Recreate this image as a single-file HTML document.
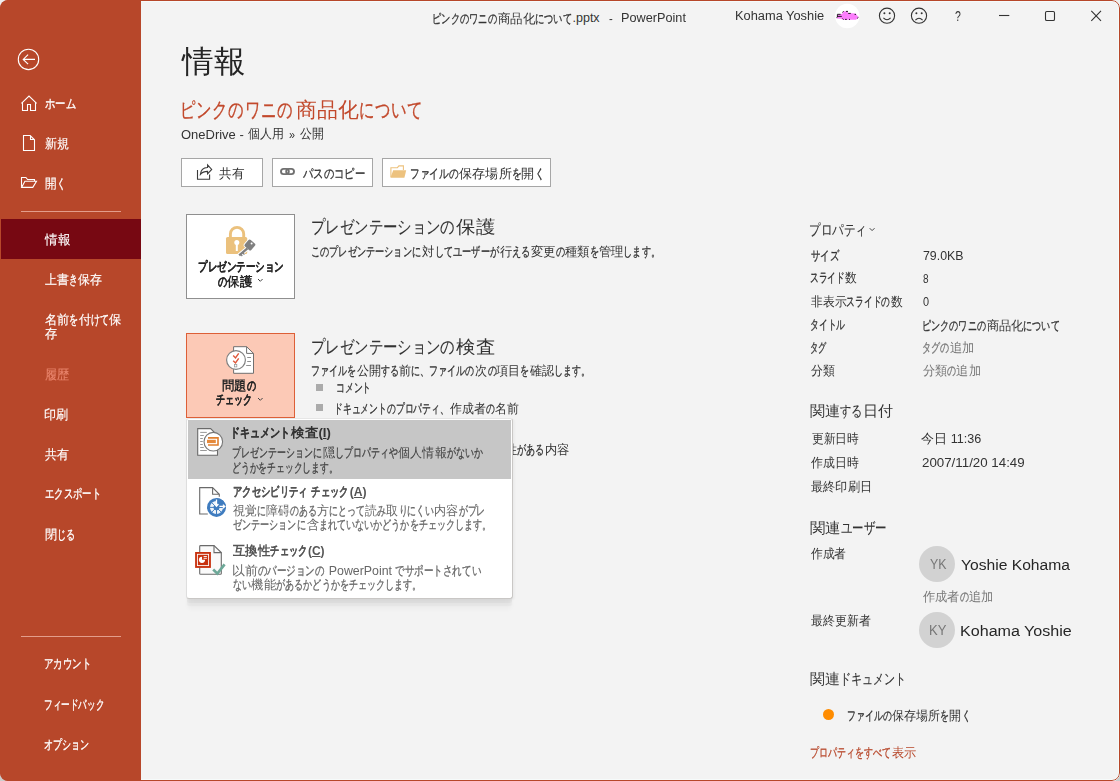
<!DOCTYPE html>
<html lang="ja">
<head>
<meta charset="utf-8">
<title>PowerPoint - 情報</title>
<style>
html,body{margin:0;padding:0}
body{width:1120px;height:781px;overflow:hidden;position:relative;background:linear-gradient(#efefef 0,#efefef 50%,#cbcdcd 50%,#cbcdcd 100%);font-family:"Liberation Sans",sans-serif;font-size:13px;color:#333}
#win{position:absolute;left:0;top:0;width:1120px;height:781px;border-radius:8px;overflow:hidden;background:#f3f3f3}
#frame{position:absolute;left:0;top:0;width:1118px;height:779px;border:1px solid #b7472a;border-radius:8px;z-index:50}
#side{position:absolute;left:0;top:0;width:141px;height:781px;background:#b7472a}
#main{position:absolute;left:141px;top:0;width:979px;height:781px;background:#f3f3f3;box-shadow:inset -2px 0 0 0 #f6fbfb, inset 0 2px 0 0 #f6fbfb, inset 0 -2px 0 0 #f6fbfb}
.abs{position:absolute}
.t{position:absolute;white-space:nowrap;line-height:40px;transform-origin:0 0;display:block}
.k{display:inline-block;transform:scaleX(.74);transform-origin:0 0;-webkit-text-stroke:.3px}
.b .k{-webkit-text-stroke:.15px}
.l .k{-webkit-text-stroke:.12px}
#side .t{-webkit-text-stroke:.15px}
#side .k{-webkit-text-stroke:.35px}
.t u{text-decoration:underline;text-underline-offset:1px}
.sel{position:absolute;left:0;top:219px;width:141px;height:40px;background:#770812}
.sep{position:absolute;left:21px;width:100px;height:1px;background:#e39d8b}
.btn{position:absolute;top:158px;height:27px;background:#fff;border:1px solid #a6a6a6}
.card{position:absolute;left:186px;width:107px;border:1px solid #8f8f8f;background:#fff}
.card.on{background:#fcc9b6;border-color:#dd5f37}
.bul{position:absolute;left:316px;width:7px;height:7px;background:#ababab}
#drop{position:absolute;left:186px;top:418px;width:325px;height:179px;background:#fff;border:1px solid #c9c7c5;border-left-color:#dedede;border-top-color:#e6e6e6;border-radius:3px;box-shadow:0 5px 1px -1px rgba(0,0,0,.03),0 8px 1.5px -1px rgba(0,0,0,.03),0 12px 5px -2px rgba(0,0,0,.03),2px 1px 2px rgba(0,0,0,.03)}
#drop .hl{position:absolute;left:1px;top:1px;width:323px;height:59px;background:#c6c6c6}
.av{position:absolute;width:36px;height:36px;border-radius:50%;background:#d2d2d2}
svg{position:absolute;left:0;top:0;overflow:visible}
</style>
</head>
<body>
<div id="win">

<!-- ============ SIDEBAR ============ -->
<div id="side">
  <div class="sel"></div>
  <div class="sep" style="top:211px"></div>
  <div class="sep" style="top:636px"></div>
  <svg width="141" height="781" viewBox="0 0 141 781" fill="none" stroke="#fff" stroke-width="1.1">
    <!-- back -->
    <circle cx="28.5" cy="59.4" r="10.2"/>
    <path d="M23.2 59.4H35M28.1 54.6L23.2 59.4L28.1 64.2"/>
    <!-- home -->
    <path d="M21.4 103.4L29 96.1L36.6 103.4M22.5 102.6V110.5H27.5V104.5H30.5V110.5H35.5V102.6"/>
    <!-- new -->
    <path d="M23.5 135.5H30.2L34.5 139.8V150.5H23.5ZM30.5 135.8V139.5H34.2"/>
    <!-- open -->
    <path d="M21.5 186.8V177.5H25.9L27.6 179.5H34.5V180.8M21.6 187.4L24.9 181.2H36.5L32.8 187.4Z"/>
  </svg>
<span class="t" style="left:44.8px;top:83.8px;font-size:12.5px;color:#ffffff;transform:scaleX(1.075)"><span class="k" style="margin-right:-0.78em">ホーム</span></span>
<span class="t" style="left:44.8px;top:124.0px;font-size:12.5px;color:#ffffff;transform:scaleX(0.931)">新規</span>
<span class="t" style="left:44.8px;top:164.1px;font-size:12.5px;color:#ffffff;transform:scaleX(0.895)">開<span class="k" style="margin-right:-0.26em">く</span></span>
<span class="t" style="left:44.8px;top:219.5px;font-size:12.5px;color:#ffffff;transform:scaleX(0.968)">情報</span>
<span class="t" style="left:44.8px;top:259.5px;font-size:12.5px;color:#ffffff;transform:scaleX(0.915)">上書<span class="k" style="margin-right:-0.26em">き</span>保存</span>
<span class="t" style="left:44.8px;top:300.3px;font-size:12.5px;color:#ffffff;transform:scaleX(0.941)">名前<span class="k" style="margin-right:-0.26em">を</span>付<span class="k" style="margin-right:-0.52em">けて</span>保</span>
<span class="t" style="left:44.8px;top:313.8px;font-size:12.5px;color:#ffffff;transform:scaleX(0.938)">存</span>
<span class="t" style="left:44.8px;top:355.1px;font-size:12.5px;color:#e8846c;transform:scaleX(0.931)">履歴</span>
<span class="t" style="left:43.9px;top:394.8px;font-size:12.5px;color:#ffffff;transform:scaleX(0.928)">印刷</span>
<span class="t" style="left:44.8px;top:434.9px;font-size:12.5px;color:#ffffff;transform:scaleX(0.915)">共有</span>
<span class="t" style="left:44.8px;top:474.4px;font-size:12.5px;color:#ffffff;transform:scaleX(0.970)"><span class="k" style="margin-right:-1.56em">エクスポート</span></span>
<span class="t" style="left:44.8px;top:515.2px;font-size:12.5px;color:#ffffff;transform:scaleX(0.941)">閉<span class="k" style="margin-right:-0.52em">じる</span></span>
<span class="t" style="left:43.9px;top:644.3px;font-size:12.5px;color:#ffffff;transform:scaleX(0.980)"><span class="k" style="margin-right:-1.30em">アカウント</span></span>
<span class="t" style="left:44.0px;top:684.5px;font-size:12.5px;color:#ffffff;transform:scaleX(0.894)"><span class="k" style="margin-right:-1.82em">フィードバック</span></span>
<span class="t" style="left:44.0px;top:725.2px;font-size:12.5px;color:#ffffff;transform:scaleX(0.941)"><span class="k" style="margin-right:-1.30em">オプション</span></span>
</div>

<!-- ============ MAIN ============ -->
<div id="main"></div>

<!-- title bar -->
<div id="titlebar">
<span class="t" style="left:431.5px;top:-1.5px;font-size:12.5px;color:#333333;transform:scaleX(0.962)"><span class="k" style="margin-right:-1.82em">ピンクのワニの</span>商品化<span class="k" style="margin-right:-1.04em">について</span></span>
<span class="t" style="left:572.5px;top:-1.7px;font-size:12.5px;color:#333333;transform:scaleX(1.000)">.pptx</span>
<span class="t" style="left:608.7px;top:-1.3px;font-size:12.5px;color:#333333;transform:scaleX(0.900)">-</span>
<span class="t" style="left:620.5px;top:-1.7px;font-size:12.5px;color:#333333;transform:scaleX(1.016)">PowerPoint</span>
<span class="t" style="left:734.5px;top:-4.0px;font-size:12.5px;color:#333333;transform:scaleX(1.026)">Kohama Yoshie</span>
<span class="t" style="left:955.0px;top:-3.6px;font-size:15px;color:#333333;transform:scaleX(0.700)">?</span>
  <svg width="1120" height="32" viewBox="0 0 1120 32" fill="none">
    <circle cx="847.3" cy="16" r="12.2" fill="#fff"/>
    <path d="M836.8 18.6L837.6 14.4L842.4 13.7L843 11.5L847.6 11L848.1 12.9L855.5 13.6L858.7 17.3L856 19.8H842.6L841 18.8Z" fill="#fb7efb"/>
    <path d="M837.4 14.3H840.6M837.4 14.3V17.2M836.5 17.6L837.4 17M837.5 16.4H841.8M842.5 12.5L843.6 11.2M846 11.4H848M848.2 13.4H850.8M854.6 14.4H856M842.6 18.5L843.6 19.6M845 19.4H846.8M849 19.4H850M857.2 18.4L858.4 17.4" stroke="#111" stroke-width=".9"/>
    <g stroke="#333" stroke-width="1.1">
      <circle cx="887" cy="15.7" r="7.6"/>
      <path d="M883.4 17.8Q887 21.6 890.6 17.8"/>
      <circle cx="919" cy="15.7" r="7.6"/>
      <path d="M915.4 20.2Q919 16.4 922.6 20.2"/>
      <path d="M999 15.5H1009.3"/>
      <rect x="1045.5" y="11.5" width="9" height="9" rx="1.3"/>
      <path d="M1091.3 10.8L1101 20.8M1101 10.8L1091.3 20.8"/>
    </g>
    <g fill="#333"><circle cx="884.4" cy="13.3" r="1"/><circle cx="889.7" cy="13.3" r="1"/><circle cx="916.4" cy="13.3" r="1"/><circle cx="921.7" cy="13.3" r="1"/></g>
  </svg>
</div>

<!-- buttons -->
<div class="btn" style="left:181px;width:80px"></div>
<div class="btn" style="left:272px;width:99px"></div>
<div class="btn" style="left:382px;width:167px"></div>

<!-- cards -->
<div class="card" style="top:214px;height:83px"></div>
<div class="card on" style="top:333px;height:83px"></div>
<div class="bul" style="top:384px"></div>
<div class="bul" style="top:404px"></div>

<!-- right column shapes -->
<div class="av" style="left:919px;top:546px"></div>
<div class="av" style="left:919px;top:612px"></div>
<div class="abs" style="left:823px;top:708.5px;width:11px;height:11px;border-radius:50%;background:#ff8c00;filter:blur(.6px)"></div>

<!-- icons in main area -->
<svg id="icons" width="1120" height="781" viewBox="0 0 1120 781" fill="none">
  <!-- share -->
  <g stroke="#3a3a3a" stroke-width="1.1">
    <path d="M197.5 170V179.2H209.6V174.6"/>
    <path d="M200.4 174.4C200.7 170 203.6 167.7 207.6 167.5V164.9L211.7 169.4L207.6 173.9V171.4C204.6 171.4 202.2 172.2 200.4 174.4Z"/>
  </g>
  <!-- link -->
  <g stroke="#707070" stroke-width="1.9">
    <rect x="281" y="168.9" width="7.8" height="5.2" rx="2.6"/>
    <rect x="286.2" y="168.9" width="7.8" height="5.2" rx="2.6"/>
  </g>
  <!-- folder -->
  <path d="M390.9 177V167.7H397.4L398.9 165.9H403.4V170" stroke="#edc27e" stroke-width="1.1"/>
  <path d="M390.4 177.8L393.2 170.2H406.2L404.4 177.8Z" fill="#edc27e"/>
  <!-- lock + key -->
  <rect x="226" y="237" width="21.2" height="17" rx="1.6" fill="#ebc17d"/>
  <path d="M230.4 238V234A6.65 6.65 0 0 1 243.7 234V238" stroke="#ebc17d" stroke-width="2.9"/>
  <circle cx="236.8" cy="242.5" r="2.5" fill="#fff"/><rect x="235.8" y="243" width="2" height="8" fill="#fff"/>
  <g stroke="#fff" stroke-width="1.6" fill="#fff">
    <rect x="245.6" y="240.7" width="8.6" height="8.6" rx="1.6" transform="rotate(42 249.9 245)"/>
    <path d="M247.2 248.6L239 255.4" stroke-width="4.2"/>
  </g>
  <rect x="245.6" y="240.7" width="8.6" height="8.6" rx="1.6" transform="rotate(42 249.9 245)" fill="#808080"/>
  <path d="M247.4 248.4L239.2 255.3" stroke="#808080" stroke-width="2.4"/>
  <path d="M241 254.6L242.3 256M243 253L244.4 254.6" stroke="#808080" stroke-width="1.2"/>
  <circle cx="251.6" cy="243.4" r="1" fill="#fff"/>
  <!-- chevrons -->
  <g stroke="#444" stroke-width="1">
    <path d="M258 279L260.3 281.3L262.6 279"/>
    <path d="M258 398L260.3 400.3L262.6 398"/>
    <path d="M869.7 228.2L872.1 230.6L874.5 228.2"/>
  </g>
  <!-- inspect -->
  <path d="M233.6 346.7H246.6L253.5 353.4V373.3H233.6Z" fill="#fff" stroke="#707070"/>
  <path d="M246.6 346.7V353.4H253.5" stroke="#707070"/>
  <path d="M247.2 357.5H251M247.2 361.5H251M246.2 365.5H251" stroke="#909090"/>
  <circle cx="236" cy="360" r="9.4" fill="#fff" stroke="#808080" stroke-width="1.2"/>
  <path d="M233.2 355.6L235.5 357.9L238.7 353.3M233.2 360.7L235.5 363L238.7 358.4" stroke="#e0573a" stroke-width="1.4"/>
  <rect x="234.4" y="364.5" width="2.4" height="2.4" stroke="#999" stroke-width=".8"/>
</svg>

<!-- ============ MAIN TEXT ============ -->
<span class="t l" style="left:182.3px;top:41.9px;font-size:31px;color:#262626;transform:scaleX(1.019);font-weight:300">情報</span>
<span class="t" style="left:179.8px;top:90.3px;font-size:20.5px;color:#c2492c;transform:scaleX(0.993)"><span class="k" style="margin-right:-1.82em">ピンクのワニの</span>商品化<span class="k" style="margin-right:-1.04em">について</span></span>
<span class="t" style="left:180.7px;top:114.5px;font-size:12.5px;color:#333333;transform:scaleX(1.038)">OneDrive -</span>
<span class="t" style="left:248.0px;top:113.8px;font-size:12.5px;color:#333333;transform:scaleX(0.921)">個人用</span>
<span class="t" style="left:289.0px;top:115.0px;font-size:12.5px;color:#333333;transform:scaleX(0.857)">»</span>
<span class="t" style="left:300.0px;top:114.3px;font-size:12.5px;color:#333333;transform:scaleX(0.920)">公開</span>
<span class="t" style="left:219.3px;top:153.5px;font-size:12.5px;color:#333333;transform:scaleX(0.969)">共有</span>
<span class="t" style="left:302.5px;top:153.5px;font-size:12.5px;color:#333333;transform:scaleX(1.074)"><span class="k" style="margin-right:-1.56em">パスのコピー</span></span>
<span class="t" style="left:410.3px;top:153.5px;font-size:12.5px;color:#333333;transform:scaleX(1.009)"><span class="k" style="margin-right:-1.30em">ファイルの</span>保存場所<span class="k" style="margin-right:-0.26em">を</span>開<span class="k" style="margin-right:-0.26em">く</span></span>
<span class="t b" style="left:197.5px;top:246.8px;font-size:12.5px;color:#262626;transform:scaleX(0.988);font-weight:700"><span class="k" style="margin-right:-2.34em">プレゼンテーション</span></span>
<span class="t b" style="left:217.5px;top:261.8px;font-size:12.5px;color:#262626;transform:scaleX(0.958);font-weight:700"><span class="k" style="margin-right:-0.26em">の</span>保護</span>
<span class="t l" style="left:310.9px;top:207.0px;font-size:17.5px;color:#333333;transform:scaleX(1.080);font-weight:300"><span class="k" style="margin-right:-2.60em">プレゼンテーションの</span>保護</span>
<span class="t" style="left:311.0px;top:231.7px;font-size:12.5px;color:#333333;transform:scaleX(0.952)"><span class="k" style="margin-right:-3.12em">このプレゼンテーションに</span>対<span class="k" style="margin-right:-1.82em">してユーザーが</span>行<span class="k" style="margin-right:-0.52em">える</span>変更<span class="k" style="margin-right:-0.26em">の</span>種類<span class="k" style="margin-right:-0.26em">を</span>管理<span class="k" style="margin-right:-1.04em">します。</span></span>
<span class="t b" style="left:222.0px;top:366.0px;font-size:12.5px;color:#262626;transform:scaleX(0.950);font-weight:700">問題<span class="k" style="margin-right:-0.26em">の</span></span>
<span class="t b" style="left:216.3px;top:380.0px;font-size:12.5px;color:#262626;transform:scaleX(0.943);font-weight:700"><span class="k" style="margin-right:-1.04em">チェック</span></span>
<span class="t l" style="left:310.9px;top:326.8px;font-size:17.5px;color:#333333;transform:scaleX(1.080);font-weight:300"><span class="k" style="margin-right:-2.60em">プレゼンテーションの</span>検査</span>
<span class="t" style="left:311.1px;top:350.5px;font-size:12.5px;color:#333333;transform:scaleX(0.934)"><span class="k" style="margin-right:-1.30em">ファイルを</span>公開<span class="k" style="margin-right:-0.52em">する</span>前<span class="k" style="margin-right:-1.82em">に、ファイルの</span>次<span class="k" style="margin-right:-0.26em">の</span>項目<span class="k" style="margin-right:-0.26em">を</span>確認<span class="k" style="margin-right:-1.04em">します。</span></span>
<span class="t" style="left:336.1px;top:368.0px;font-size:12.5px;color:#333333;transform:scaleX(0.917)"><span class="k" style="margin-right:-1.04em">コメント</span></span>
<span class="t" style="left:334.2px;top:388.5px;font-size:12.5px;color:#333333;transform:scaleX(0.917)"><span class="k" style="margin-right:-3.38em">ドキュメントのプロパティ、</span>作成者<span class="k" style="margin-right:-0.26em">の</span>名前</span>
<span class="t" style="left:504.5px;top:430.0px;font-size:12.5px;color:#333333;transform:scaleX(0.944)">性<span class="k" style="margin-right:-0.78em">がある</span>内容</span>
<span class="t l" style="left:808.5px;top:210.0px;font-size:14.5px;color:#333333;transform:scaleX(1.042);font-weight:300"><span class="k" style="margin-right:-1.30em">プロパティ</span></span>
<span class="t" style="left:810.8px;top:235.8px;font-size:12.5px;color:#333333;transform:scaleX(0.979)"><span class="k" style="margin-right:-0.78em">サイズ</span></span>
<span class="t" style="left:922.5px;top:236.3px;font-size:12.5px;color:#333333;transform:scaleX(0.988)">79.0KB</span>
<span class="t" style="left:809.9px;top:258.2px;font-size:12.5px;color:#333333;transform:scaleX(0.906)"><span class="k" style="margin-right:-1.04em">スライド</span>数</span>
<span class="t" style="left:810.8px;top:281.8px;font-size:12.5px;color:#333333;transform:scaleX(0.908)">非表示<span class="k" style="margin-right:-1.30em">スライドの</span>数</span>
<span class="t" style="left:809.9px;top:305.0px;font-size:12.5px;color:#333333;transform:scaleX(0.918)"><span class="k" style="margin-right:-1.04em">タイトル</span></span>
<span class="t" style="left:921.6px;top:305.5px;font-size:12.5px;color:#333333;transform:scaleX(0.946)"><span class="k" style="margin-right:-1.82em">ピンクのワニの</span>商品化<span class="k" style="margin-right:-1.04em">について</span></span>
<span class="t" style="left:809.9px;top:327.6px;font-size:12.5px;color:#333333;transform:scaleX(0.853)"><span class="k" style="margin-right:-0.52em">タグ</span></span>
<span class="t" style="left:921.6px;top:328.1px;font-size:12.5px;color:#777777;transform:scaleX(0.943)"><span class="k" style="margin-right:-0.78em">タグの</span>追加</span>
<span class="t" style="left:810.8px;top:351.1px;font-size:12.5px;color:#333333;transform:scaleX(0.912)">分類</span>
<span class="t" style="left:922.5px;top:351.1px;font-size:12.5px;color:#777777;transform:scaleX(0.934)">分類<span class="k" style="margin-right:-0.26em">の</span>追加</span>
<span class="t" style="left:922.7px;top:258.7px;font-size:12.5px;color:#333333;transform:scaleX(0.800)">8</span>
<span class="t" style="left:922.7px;top:281.8px;font-size:12.5px;color:#333333;transform:scaleX(0.871)">0</span>
<span class="t l" style="left:809.8px;top:391.3px;font-size:14.5px;color:#333333;transform:scaleX(1.007);font-weight:300">関連<span class="k" style="margin-right:-0.52em">する</span>日付</span>
<span class="t" style="left:811.6px;top:418.9px;font-size:12.5px;color:#333333;transform:scaleX(0.902)">更新日時</span>
<span class="t" style="left:921.3px;top:418.9px;font-size:12.5px;color:#333333;transform:scaleX(1.007)">今日 11:36</span>
<span class="t" style="left:811.0px;top:443.0px;font-size:12.5px;color:#333333;transform:scaleX(0.913)">作成日時</span>
<span class="t" style="left:921.5px;top:443.0px;font-size:12.5px;color:#333333;transform:scaleX(1.065)">2007/11/20 14:49</span>
<span class="t" style="left:811.0px;top:466.8px;font-size:12.5px;color:#333333;transform:scaleX(0.937)">最終印刷日</span>
<span class="t l" style="left:809.8px;top:507.5px;font-size:14.5px;color:#333333;transform:scaleX(1.032);font-weight:300">関連<span class="k" style="margin-right:-1.04em">ユーザー</span></span>
<span class="t" style="left:811.0px;top:534.3px;font-size:12.5px;color:#333333;transform:scaleX(0.903)">作成者</span>
<span class="t" style="left:960.5px;top:545.0px;font-size:15.5px;color:#262626;transform:scaleX(1.009)">Yoshie Kohama</span>
<span class="t" style="left:923.0px;top:577.3px;font-size:12.5px;color:#777777;transform:scaleX(0.939)">作成者<span class="k" style="margin-right:-0.26em">の</span>追加</span>
<span class="t" style="left:811.0px;top:600.5px;font-size:12.5px;color:#333333;transform:scaleX(0.918)">最終更新者</span>
<span class="t" style="left:959.5px;top:611.0px;font-size:15.5px;color:#262626;transform:scaleX(1.038)">Kohama Yoshie</span>
<span class="t l" style="left:810.0px;top:659.3px;font-size:14.5px;color:#333333;transform:scaleX(0.993);font-weight:300">関連<span class="k" style="margin-right:-1.56em">ドキュメント</span></span>
<span class="t" style="left:846.8px;top:696.1px;font-size:12.5px;color:#333333;transform:scaleX(0.925)"><span class="k" style="margin-right:-1.30em">ファイルの</span>保存場所<span class="k" style="margin-right:-0.26em">を</span>開<span class="k" style="margin-right:-0.26em">く</span></span>
<span class="t" style="left:810.0px;top:732.5px;font-size:12.5px;color:#b7472a;transform:scaleX(0.935)"><span class="k" style="margin-right:-2.34em">プロパティをすべて</span>表示</span>
<span class="t" style="left:929.5px;top:543.8px;font-size:15px;color:#777777;transform:scaleX(0.825)">YK</span>
<span class="t" style="left:928.6px;top:610.0px;font-size:15px;color:#777777;transform:scaleX(0.868)">KY</span>

<!-- ============ DROPDOWN ============ -->
<div id="drop"><div class="hl"></div></div>
<svg id="dicons" width="1120" height="781" viewBox="0 0 1120 781" fill="none">
  <!-- 1 document inspector -->
  <path d="M197.7 428.6H210.6L217.5 435.5V455.3H197.7Z" fill="#fff" stroke="#6a6a6a" stroke-width="1.1"/>
  <path d="M200.2 432.4H206.8M200.2 435.5H203.8M200.2 438.5H202.8M200.2 441.5H202.8M200.2 444.5H202.8M200.2 447.5H203.8M200.2 450.5H206.8" stroke="#999"/>
  <circle cx="213.3" cy="441.7" r="9.3" fill="#fff" stroke="#777" stroke-width="1.1"/>
  <path d="M208 437.9H218V445H208" stroke="#e07f2e" stroke-width="1.6"/>
  <rect x="207" y="439.8" width="8.8" height="3.3" fill="#e5893a"/>
  <!-- 2 accessibility -->
  <path d="M207.8 514H199.7V487.6H212.6L219.3 494.3V496.8M212.6 487.6V494.3H219.3" stroke="#6a6a6a" stroke-width="1.1"/>
  <circle cx="216.5" cy="507.4" r="9.5" fill="#3f7cbf"/>
  <circle cx="216.5" cy="507.4" r="6.5" fill="#eef4fa"/>
  <path d="M216.5 507.4V497.9A9.5 9.5 0 0 1 226 507.4Z" fill="#3f7cbf"/>
  <circle cx="216.5" cy="507.4" r="3" fill="#3f7cbf"/>
  <path d="M210 507.4H223M216.5 507.4V514M211.9 502.8L221.1 512M211.9 512L216.5 507.4" stroke="#3f7cbf" stroke-width="1"/>
  <path d="M216.5 499.6V505.6M214.6 504L216.5 506.2L218.4 504" stroke="#fff" stroke-width="1.3"/>
  <path d="M219.4 506.4H224.4M222.9 504.6L224.9 506.4L222.9 508.2" stroke="#fff" stroke-width="1.2"/>
  <!-- 3 compatibility -->
  <path d="M200.6 545.6H214L221.3 552.6V573.4Q221.3 574.3 220.4 574.3H200.6Q199.7 574.3 199.7 573.4V546.5Q199.7 545.6 200.6 545.6Z" fill="#fafafa" stroke="#6a6a6a" stroke-width="1.1"/>
  <path d="M214 545.6V552.6H221.3" stroke="#6a6a6a" stroke-width="1.1"/>
  <rect x="195.1" y="552" width="15.8" height="15.9" fill="#c8310e"/>
  <rect x="197.4" y="554.3" width="11.2" height="11.3" stroke="#fff" stroke-width=".9"/>
  <path d="M202 559.8V556.7A3.1 3.1 0 1 0 205.1 559.8Z" fill="#fff"/>
  <path d="M203.6 556.5H206.9M203.6 558.3H206.9" stroke="#fff" stroke-width=".9"/>
  <path d="M213.2 569.5L217.4 573.6L224.6 564.4" stroke="#6da898" stroke-width="2.7"/>
</svg>
<span class="t b" style="left:230.2px;top:413.0px;font-size:12.5px;color:#333333;transform:scaleX(1.047);font-weight:700"><span class="k" style="margin-right:-1.56em">ドキュメント</span>検査(<u>I</u>)</span>
<span class="t" style="left:232.4px;top:432.5px;font-size:12.5px;color:#444444;transform:scaleX(0.930)"><span class="k" style="margin-right:-2.60em">プレゼンテーションに</span>隠<span class="k" style="margin-right:-1.82em">しプロパティや</span>個人情報<span class="k" style="margin-right:-1.04em">がないか</span></span>
<span class="t" style="left:232.4px;top:447.5px;font-size:12.5px;color:#444444;transform:scaleX(0.914)"><span class="k" style="margin-right:-3.12em">どうかをチェックします。</span></span>
<span class="t b" style="left:233.3px;top:472.0px;font-size:12.5px;color:#555555;transform:scaleX(0.969);font-weight:700"><span class="k" style="margin-right:-2.08em">アクセシビリティ</span> <span class="k" style="margin-right:-1.04em">チェック</span>(<u>A</u>)</span>
<span class="t" style="left:233.3px;top:491.1px;font-size:12.5px;color:#666666;transform:scaleX(0.925)">視覚<span class="k" style="margin-right:-0.26em">に</span>障碍<span class="k" style="margin-right:-0.78em">のある</span>方<span class="k" style="margin-right:-1.04em">にとって</span>読<span class="k" style="margin-right:-0.26em">み</span>取<span class="k" style="margin-right:-1.04em">りにくい</span>内容<span class="k" style="margin-right:-0.78em">がプレ</span></span>
<span class="t" style="left:233.3px;top:505.2px;font-size:12.5px;color:#666666;transform:scaleX(0.943)"><span class="k" style="margin-right:-2.08em">ゼンテーションに</span>含<span class="k" style="margin-right:-4.94em">まれていないかどうかをチェックします。</span></span>
<span class="t b" style="left:233.3px;top:530.7px;font-size:12.5px;color:#555555;transform:scaleX(0.960);font-weight:700">互換性<span class="k" style="margin-right:-1.04em">チェック</span>(<u>C</u>)</span>
<span class="t" style="left:232.3px;top:550.5px;font-size:12.5px;color:#666666;transform:scaleX(0.990)">以前<span class="k" style="margin-right:-1.82em">のバージョンの</span> PowerPoint <span class="k" style="margin-right:-2.34em">でサポートされてい</span></span>
<span class="t" style="left:233.3px;top:565.0px;font-size:12.5px;color:#666666;transform:scaleX(0.941)"><span class="k" style="margin-right:-0.52em">ない</span>機能<span class="k" style="margin-right:-4.16em">があるかどうかをチェックします。</span></span>


<div id="frame"></div>
</div>
</body>
</html>
